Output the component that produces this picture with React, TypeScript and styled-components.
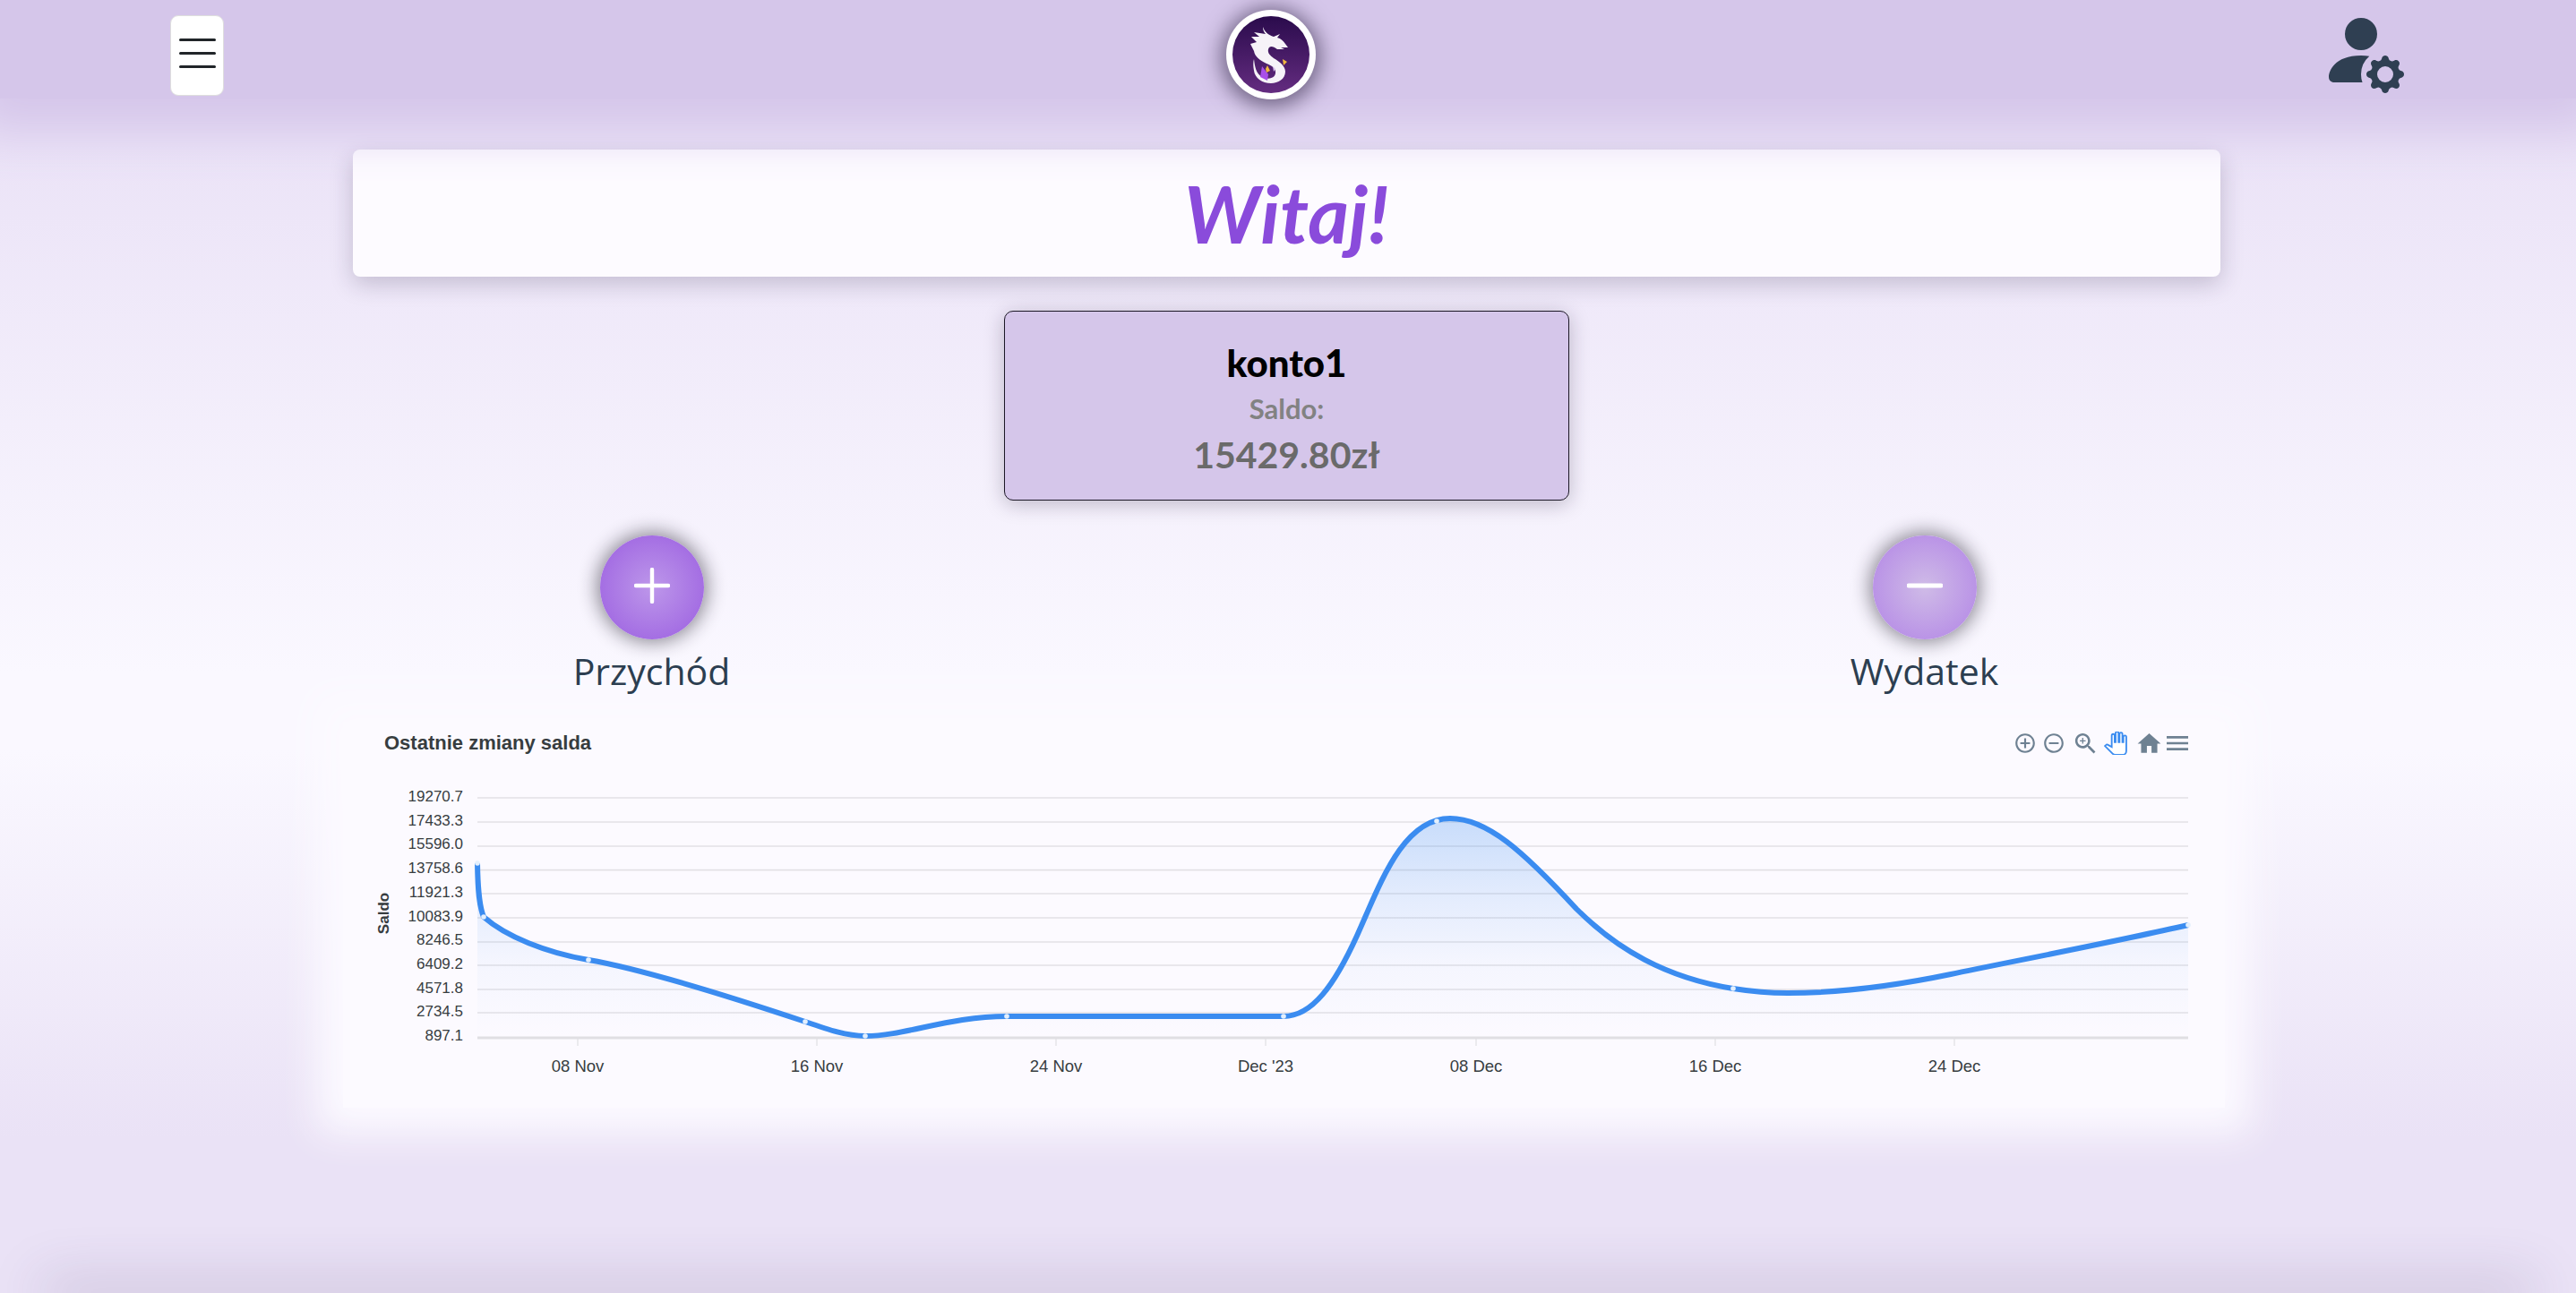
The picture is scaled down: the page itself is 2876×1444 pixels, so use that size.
import React from "react";
import styled, { createGlobalStyle } from "styled-components";
import { BsPersonFillGear } from "react-icons/bs";

const Global = createGlobalStyle`
  html, body { margin: 0; padding: 0; }
  body { font-family: "Open Sans", sans-serif; }
`;

const Page = styled.div`
  position: relative;
  width: 2876px;
  height: 1444px;
  overflow: hidden;
  display: flex;
  flex-direction: column;
  background: linear-gradient(to bottom, #ebe3f7 0, #ebe3f7 11%, #faf8ff 52%, #faf8ff 58%, #eae2f6 88%, #eae2f6 100%);
`;

const Header = styled.header`
  position: relative;
  z-index: 2;
  height: 110px;
  flex: none;
  display: flex;
  justify-content: space-between;
  align-items: flex-start;
  padding: 8px 192px 0 190px;
  box-sizing: border-box;
  background: #d5c6ea;
  box-shadow: 0 8px 50px 30px #d5c6ea;
`;

const Burger = styled.button`
  width: 60px;
  height: 90px;
  margin-top: 9px;
  padding: 25px 0 0;
  box-sizing: border-box;
  display: flex;
  flex-direction: column;
  align-items: center;
  gap: 12px;
  background: #fff;
  border: 1px solid #dedede;
  border-radius: 9px;
`;

const BurgerLine = styled.span`
  width: 41px;
  height: 3px;
  border-radius: 2px;
  background: #212529;
`;

const Logo = styled.div`
  width: 100px;
  height: 100px;
  margin-top: 3px;
  border-radius: 50%;
  background: #fff;
  box-shadow: 0 3px 22px 6px rgba(20, 10, 40, 0.5);
  svg { display: block; }
`;

const UserButton = styled.div`
  width: 96px;
  height: 96px;
  color: #2f3f52;
  svg { display: block; }
`;

const Section = styled.section`
  position: relative;
  z-index: 1;
  flex: none;
  padding: 57px 397px 0 394px;
  display: flex;
  flex-direction: column;
  align-items: center;
`;

const WelcomeCard = styled.div`
  align-self: stretch;
  height: 142px;
  display: flex;
  align-items: center;
  justify-content: center;
  background: #fdfbff;
  border-radius: 8px;
  box-shadow: 0 8px 26px rgba(40, 30, 70, 0.22);
`;

const Title = styled.h1`
  margin: 0;
  font-family: Lato, sans-serif;
  font-style: italic;
  font-weight: 700;
  font-size: 88px;
  line-height: 1;
  color: #8a4bdb;
`;

const AccountCard = styled.div`
  width: 631px;
  height: 212px;
  margin-top: 38px;
  box-sizing: border-box;
  padding-top: 27px;
  display: flex;
  flex-direction: column;
  align-items: center;
  background: #d5c6ea;
  border: 1.5px solid #1c1826;
  border-radius: 10px;
  box-shadow: 0 4px 22px rgba(30, 20, 50, 0.26);
  font-family: Lato, sans-serif;
`;

const AccountName = styled.div`
  font-size: 42px;
  line-height: 60px;
  font-weight: 900;
  color: #000;
`;

const BalanceLabel = styled.div`
  font-size: 31px;
  line-height: 42px;
  font-weight: 700;
  color: #828282;
`;

const BalanceValue = styled.div`
  margin-top: 6px;
  font-size: 41px;
  line-height: 50px;
  font-weight: 700;
  color: #6a6a6a;
`;

const ActionRow = styled.div`
  position: relative;
  z-index: 1;
  flex: none;
  margin-top: 39px;
  display: grid;
  grid-template-columns: repeat(2, 1421px);
  justify-content: center;
`;

const Action = styled.div`
  display: flex;
  flex-direction: column;
  align-items: center;
`;

const Circle = styled.div<{ $tone: "strong" | "soft" }>`
  width: 116px;
  height: 116px;
  border-radius: 50%;
  display: flex;
  align-items: center;
  justify-content: center;
  background: ${(p) =>
    p.$tone === "strong"
      ? "radial-gradient(circle, #bd97ea 0%, #9a5de0 100%)"
      : "radial-gradient(circle, #cfbbe7 0%, #b183e6 100%)"};
  box-shadow: 0 0 20px 4px rgba(30, 25, 40, 0.48);
  svg { display: block; margin-top: -4px; }
`;

const ActionLabel = styled.div`
  font-family: "Open Sans", sans-serif;
  font-size: 41px;
  line-height: 54px;
  margin-top: 8px;
  color: #2c3e50;
`;

const ChartCard = styled.div`
  position: relative;
  z-index: 0;
  flex: none;
  width: 2101px;
  height: 431px;
  margin: 30px 0 0 383px;
  padding-top: 9px;
  box-sizing: border-box;
  background: #fcfaff;
  box-shadow: 0 0 40px 28px #fcfaff;
`;

const ChartHeader = styled.div`
  height: 30px;
  padding: 0 37px 0 46px;
  display: flex;
  align-items: center;
  justify-content: space-between;
`;

const ChartTitle = styled.div`
  font-family: "Liberation Sans", Arial, sans-serif;
  font-size: 22px;
  font-weight: 700;
  color: #373d3f;
`;

const Toolbar = styled.div`
  display: flex;
  align-items: center;
`;

const ToolIcon = styled.svg<{ $gap: number; $size: number }>`
  display: block;
  width: ${(p) => p.$size}px;
  height: ${(p) => p.$size}px;
  margin-left: ${(p) => p.$gap}px;
  fill: #6e8192;
`;

const PanIcon = styled(ToolIcon)`
  fill: #fff;
  stroke: #3b8cf0;
  stroke-width: 1.7;
`;

const Plot = styled.svg`
  display: block;
  width: 2101px;
  height: 370px;
  margin-top: 15px;
`;

const AxisLabel = styled.text`
  font-family: "Liberation Sans", Arial, sans-serif;
  font-size: 17px;
  fill: #373d3f;
`;

const TickLabel = styled(AxisLabel)`
  font-size: 18.5px;
`;

const AxisTitle = styled(AxisLabel)`
  font-weight: 700;
`;

const BottomEdge = styled.div`
  position: absolute;
  left: 60px;
  right: 60px;
  bottom: 0;
  height: 0;
  box-shadow: 0 0 60px 14px rgba(70, 50, 100, 0.22);
`;

const yLabels = ["19270.7", "17433.3", "15596.0", "13758.6", "11921.3", "10083.9", "8246.5", "6409.2", "4571.8", "2734.5", "897.1"];
const gridY = [891, 918, 945, 971.6, 998, 1025, 1052, 1078, 1105, 1131];
const xTicks: [number, string][] = [[645, "08 Nov"], [912, "16 Nov"], [1179, "24 Nov"], [1413, "Dec '23"], [1648, "08 Dec"], [1915, "16 Dec"], [2182, "24 Dec"]];
const dots: [number, number][] = [[533, 964], [540, 1024], [657, 1072], [899, 1141], [966, 1157], [1124, 1135], [1433, 1135], [1604, 917], [1935, 1104], [2443, 1033]];

const line =
  "M533 964 C533.5 995 535 1012 540 1024 " +
  "C565 1046 610 1064 657 1072 " +
  "C710 1081 800 1108 899 1141 " +
  "C925 1150 945 1157 966 1157 " +
  "C1010 1157 1060 1135 1124 1135 " +
  "L1433 1135 " +
  "C1465 1135 1490 1100 1515 1045 " +
  "C1540 990 1565 914 1619 914 " +
  "C1660 914 1700 950 1760 1015 " +
  "C1805 1060 1860 1092 1935 1104 " +
  "C1960 1108 1975 1109 1996 1109 " +
  "C2060 1109 2120 1100 2178 1088 " +
  "C2240 1075 2360 1052 2443 1033";

const DragonLogo = () => (
  <svg width="100" height="100" viewBox="0 0 100 100">
    <defs>
      <linearGradient id="logoBg" x1="0" y1="0" x2="0" y2="1">
        <stop offset="0" stopColor="#2a0b4c" />
        <stop offset="1" stopColor="#642c80" />
      </linearGradient>
    </defs>
    <circle cx="50" cy="50" r="43" fill="url(#logoBg)" />
    <path
      fill="#f6f3f8"
      d="M41 19 C43 25 47 28 53 30 L60 27 L57 31 C61 32 64 35 66 38 L69 42 L61 42 L65 44 L57 44 C52 40 48 40 47 44 C46 48 49 51 53 54 C60 58 66 63 66 69 C66 77 58 82 50 82 C40 82 32 76 31 68 C30 63 30 58 31 55 C32 63 33 71 40 75 C46 78 54 77 55 71 C56 65 50 62 45 60 C37 56 32 52 31 46 L27 38 L34 36 L28 30 L37 30 L31 25 L44 27 C42 25 41 22 41 19 Z"
    />
    <path fill="#a94fe8" d="M40 63 L47 72 L46 79 L38 75 Z" />
    <path fill="#f1b93f" d="M63 55 L68 58 L64 62 Z M46 62 L49 68 L45 70 L44 66 Z" />
    <path fill="#d8c2ee" d="M52 63 L55 66 L53 69 Z" />
  </svg>
);

export default function App() {
  return (
    <Page>
      <Global />
      <Header>
        <Burger aria-label="menu">
          <BurgerLine />
          <BurgerLine />
          <BurgerLine />
        </Burger>
        <Logo>
          <DragonLogo />
        </Logo>
        <UserButton>
          <BsPersonFillGear size={96} />
        </UserButton>
      </Header>
      <Section>
        <WelcomeCard>
          <Title>Witaj!</Title>
        </WelcomeCard>
        <AccountCard>
          <AccountName>konto1</AccountName>
          <BalanceLabel>Saldo:</BalanceLabel>
          <BalanceValue>15429.80zł</BalanceValue>
        </AccountCard>
      </Section>
      <ActionRow>
        <Action>
          <Circle $tone="strong">
            <svg width="40" height="40" viewBox="0 0 40 40" fill="none" stroke="#fff" strokeWidth="4.4" strokeLinecap="round">
              <path d="M2 20H38M20 2V38" />
            </svg>
          </Circle>
          <ActionLabel>Przychód</ActionLabel>
        </Action>
        <Action>
          <Circle $tone="soft">
            <svg width="40" height="40" viewBox="0 0 40 40" fill="none" stroke="#fff" strokeWidth="5" strokeLinecap="round">
              <path d="M2 20H38" />
            </svg>
          </Circle>
          <ActionLabel>Wydatek</ActionLabel>
        </Action>
      </ActionRow>
      <ChartCard>
        <ChartHeader>
          <ChartTitle>Ostatnie zmiany salda</ChartTitle>
          <Toolbar>
            <ToolIcon $gap={0} $size={26} viewBox="0 0 24 24">
              <path d="M13 7h-2v4H7v2h4v4h2v-4h4v-2h-4V7zm-1-5C6.48 2 2 6.48 2 12s4.48 10 10 10 10-4.48 10-10S17.52 2 12 2zm0 18c-4.41 0-8-3.59-8-8s3.59-8 8-8 8 3.59 8 8-3.59 8-8 8z" />
            </ToolIcon>
            <ToolIcon $gap={6} $size={26} viewBox="0 0 24 24">
              <path d="M7 11v2h10v-2H7zm5-9C6.48 2 2 6.48 2 12s4.48 10 10 10 10-4.48 10-10S17.52 2 12 2zm0 18c-4.41 0-8-3.59-8-8s3.59-8 8-8 8 3.59 8 8-3.59 8-8 8z" />
            </ToolIcon>
            <ToolIcon $gap={7} $size={31} viewBox="0 0 24 24">
              <path d="M15.5 14h-.79l-.28-.27C15.41 12.59 16 11.11 16 9.5 16 5.91 13.09 3 9.5 3S3 5.91 3 9.5 5.91 16 9.5 16c1.61 0 3.09-.59 4.23-1.57l.27.28v.79l5 4.99L20.49 19l-4.99-5zm-6 0C7.01 14 5 11.99 5 9.5S7.01 5 9.5 5 14 7.01 14 9.5 11.99 14 9.5 14z" />
              <path d="M12 10h-2v2H9v-2H7V9h2V7h1v2h2v1z" />
            </ToolIcon>
            <PanIcon $gap={5} $size={26} viewBox="0 0 24 24">
              <path d="M23 5.5V20c0 2.2-1.8 4-4 4h-7.3c-1.08 0-2.1-.43-2.85-1.19L1 14.83s1.26-1.23 1.3-1.25c.22-.19.49-.29.79-.29.22 0 .42.06.6.16.04.01 4.31 2.46 4.31 2.46V4c0-.83.67-1.5 1.5-1.5S11 3.17 11 4v7h1V1.5c0-.83.67-1.5 1.5-1.5S15 .67 15 1.5V11h1V2.5c0-.83.67-1.5 1.5-1.5s1.5.67 1.5 1.5V11h1V5.5c0-.83.67-1.5 1.5-1.5s1.5.67 1.5 1.5z" />
            </PanIcon>
            <ToolIcon $gap={9} $size={31} viewBox="0 0 24 24">
              <path d="M10 20v-6h4v6h5v-8h3L12 3 2 12h3v8z" />
            </ToolIcon>
            <ToolIcon $gap={0} $size={32} viewBox="0 0 24 24">
              <path d="M3 18h18v-2H3v2zm0-5h18v-2H3v2zm0-7v2h18V6H3z" />
            </ToolIcon>
          </Toolbar>
        </ChartHeader>
        <Plot viewBox="383 860 2101 370">
          <defs>
            <linearGradient id="areaFill" gradientUnits="userSpaceOnUse" x1="0" y1="914" x2="0" y2="1159">
              <stop offset="0" stopColor="#3b8cf0" stopOpacity="0.27" />
              <stop offset="0.35" stopColor="#3b8cf0" stopOpacity="0.13" />
              <stop offset="0.65" stopColor="#3b8cf0" stopOpacity="0.04" />
              <stop offset="1" stopColor="#3b8cf0" stopOpacity="0" />
            </linearGradient>
          </defs>
          {gridY.map((y) => (
            <line key={y} x1="533" x2="2443" y1={y} y2={y} stroke="#e3e1e6" strokeWidth="1.6" />
          ))}
          <line x1="533" x2="2443" y1="1159" y2="1159" stroke="#e0dfe3" strokeWidth="3" />
          {xTicks.map(([x, label]) => (
            <React.Fragment key={label}>
              <line x1={x} x2={x} y1="1160" y2="1168" stroke="#e0dfe3" strokeWidth="1.2" />
              <TickLabel x={x} y="1197" textAnchor="middle">{label}</TickLabel>
            </React.Fragment>
          ))}
          {yLabels.map((label, i) => (
            <AxisLabel key={label} x="517" y={i === 10 ? 1162 : 895 + i * 26.7} textAnchor="end">{label}</AxisLabel>
          ))}
          <AxisTitle transform="translate(434 1020) rotate(-90)" textAnchor="middle">Saldo</AxisTitle>
          <path d={`${line} L2443 1159 L533 1159 Z`} fill="url(#areaFill)" />
          <path d={line} fill="none" stroke="#3b8cf0" strokeWidth="6" />
          {dots.map(([x, y]) => (
            <circle key={x} cx={x} cy={y} r="2.8" fill="#e3effd" />
          ))}
        </Plot>
      </ChartCard>
      <BottomEdge />
    </Page>
  );
}
